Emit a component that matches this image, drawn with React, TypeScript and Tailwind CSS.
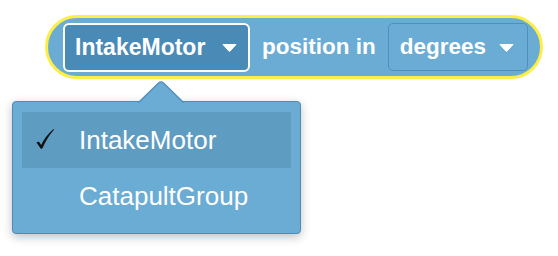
import * as React from "react";

const font = { fontFamily: '"Liberation Sans", Arial, sans-serif' };

function Caret({ className }: { className?: string }) {
  return (
    <svg width="15" height="9" viewBox="0 0 15 9" className={className}>
      <path d="M1 1.5 L14 1.5 L8.2 8 Q7.5 8.7 6.8 8 Z" fill="#ffffff" stroke="#ffffff" strokeWidth="1" strokeLinejoin="round" />
    </svg>
  );
}

function Check() {
  return (
    <svg width="20" height="22" viewBox="0 0 20 22" className="absolute left-[13px] top-[16px]">
      <path
        d="M1.5 14.5 Q3 13.2 4.2 14 L6.2 17 Q10 8.5 18.5 1 Q19.3 1.3 18.8 2 Q12 9.5 7.6 20 Q6.8 21.3 5.6 20.4 Z"
        fill="#111111"
      />
    </svg>
  );
}

export default function App() {
  const [selected] = React.useState("IntakeMotor");
  const options = ["IntakeMotor", "CatapultGroup"];

  return (
    <div className="relative w-[558px] h-[256px] bg-white overflow-hidden" style={font}>
      <div className="ml-[45px] mt-[15px] w-[498px] h-[64px] rounded-full border-[3px] border-[#fdee45] bg-[#6aacd4] flex items-center pl-[15px] pr-[13px] gap-[12px]">
        <div className="shrink-0 w-[187px] h-[49px] rounded-[6px] border-2 border-white bg-[#4a8ab7] flex items-center pl-[10px] pr-[11px] justify-between">
          <span className="text-white font-bold text-[23px] leading-none">{selected}</span>
          <Caret />
        </div>
        <span className="shrink-0 whitespace-nowrap text-white font-bold text-[22.5px] leading-none">position in</span>
        <div className="shrink-0 w-[140px] h-[48px] rounded-[5px] border border-[#4f8fbc] bg-[#6aacd4] flex items-center pl-[11px] pr-[13px] justify-between">
          <span className="text-white font-bold text-[22.5px] leading-none">degrees</span>
          <Caret />
        </div>
      </div>

      <div className="absolute left-[12px] top-[101px] w-[289px] h-[133px] rounded-[4px] border border-[#4e8cb8] bg-[#6aacd4] shadow-[0_3px_10px_rgba(0,0,0,0.25)] px-[9px] py-[10px]">
        <svg className="absolute left-[124px] -top-[21px]" width="48" height="23" viewBox="0 0 48 23">
          <path d="M1 22 L21.5 2 Q24 -0.2 26.5 2 L47 22" fill="#6aacd4" stroke="#4e8cb8" strokeWidth="1.2" />
          <rect x="0" y="21.6" width="48" height="2" fill="#6aacd4" />
        </svg>
        {options.map((o) => (
          <div
            key={o}
            className={
              "relative h-[56px] flex items-center pl-[57px] text-white text-[26px] " +
              (o === selected ? "bg-[#5f9cc2]" : "")
            }
          >
            {o === selected && <Check />}
            {o}
          </div>
        ))}
      </div>
    </div>
  );
}
